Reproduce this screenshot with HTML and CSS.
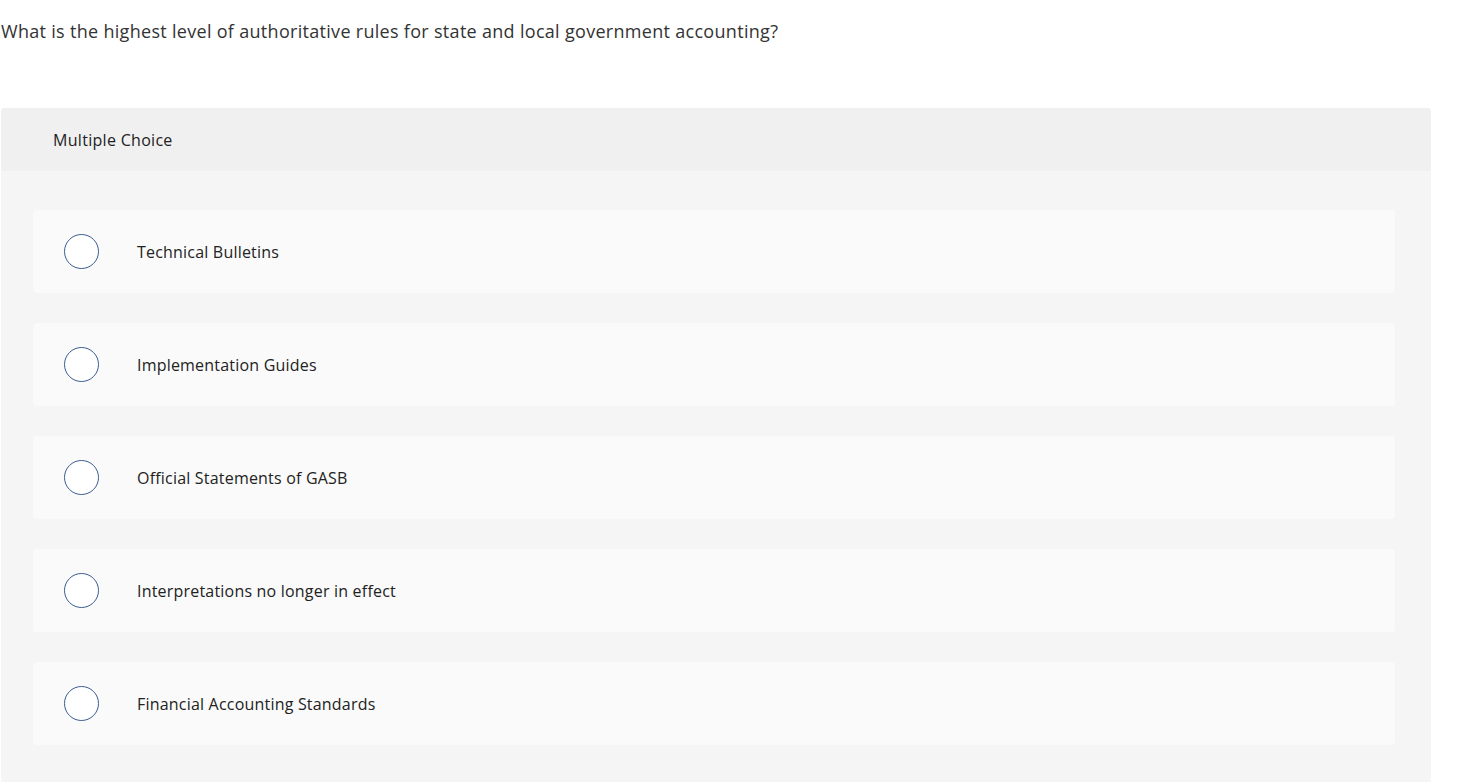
FILE: index.html
```html
<!DOCTYPE html>
<html>
<head>
<meta charset="utf-8">
<link rel="stylesheet" href="styles.css">
</head>
<body>
<div class="page">
  <p class="question">What is the highest level of authoritative rules for state and local government accounting?</p>
  <section class="panel">
    <div class="panel-header">Multiple Choice</div>
    <div class="panel-body">
      <div class="option"><span class="radio"></span><span class="label">Technical Bulletins</span></div>
      <div class="option"><span class="radio"></span><span class="label">Implementation Guides</span></div>
      <div class="option"><span class="radio"></span><span class="label">Official Statements of GASB</span></div>
      <div class="option"><span class="radio"></span><span class="label">Interpretations no longer in effect</span></div>
      <div class="option"><span class="radio"></span><span class="label">Financial Accounting Standards</span></div>
    </div>
  </section>
</div>
</body>
</html>
```
FILE: styles.css
```css
html, body {
  margin: 0;
  padding: 0;
  background: #fff;
}
body {
  font-family: "Open Sans", "Lato", sans-serif;
  color: #333;
}
.page {
  width: 1430px;
  padding-left: 1px;
}
.question {
  margin: 0;
  padding-top: 18px;
  font-size: 18px;
  letter-spacing: 0.3px;
  line-height: 26px;
  height: 108px;
  box-sizing: border-box;
  color: #333;
}
.panel {
  border-radius: 4px 4px 0 0;
  overflow: hidden;
  background: #f5f5f5;
}
.panel-header {
  background: #f0f0f0;
  height: 63px;
  display: flex;
  align-items: center;
  padding-left: 52px;
  font-size: 16px;
  letter-spacing: 0.3px;
  color: #222;
}
.panel-body {
  display: flex;
  flex-direction: column;
  gap: 30px;
  padding: 39px 36px 37px 32px;
}
.option {
  background: #fafafa;
  border-radius: 4px;
  height: 83px;
  display: flex;
  align-items: center;
  padding-left: 31px;
}
.radio {
  width: 33px;
  height: 33px;
  border: 1.5px solid #3b5d8f;
  border-radius: 50%;
  background: #fff;
  flex: none;
}
.label {
  margin-left: 38px;
  font-size: 16px;
  letter-spacing: 0.2px;
  color: #222;
}
```
